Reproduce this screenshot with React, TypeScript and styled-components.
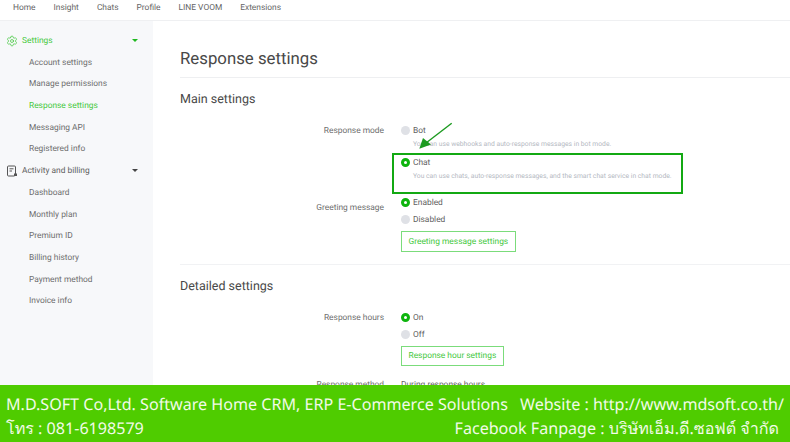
import React from "react";
import styled, { createGlobalStyle } from "styled-components";
import { Settings } from "lucide-react";

const navItems = ["Home", "Insight", "Chats", "Profile", "LINE VOOM", "Extensions"];
const settingsItems = ["Account settings", "Manage permissions", "Response settings", "Messaging API", "Registered info"];
const billingItems = ["Dashboard", "Monthly plan", "Premium ID", "Billing history", "Payment method", "Invoice info"];

const BillingIcon = () => (
  <svg width="12" height="12" viewBox="0 0 12 12" fill="none" stroke="#555" strokeWidth="1">
    <path d="M9.5 9V2a1 1 0 0 0-1-1h-6a1 1 0 0 0-1 1v8a1 1 0 0 0 1 1h6" />
    <path d="M3.5 3.8h4M3.5 6h2.5" />
    <rect x="8" y="8.5" width="3" height="2.5" fill="#555" stroke="none" />
  </svg>
);

const App = () => {
  return (
    <Page>
      <GlobalStyle />
      <Nav>
        {navItems.map((item) => (
          <NavItem key={item}>{item}</NavItem>
        ))}
      </Nav>
      <Body>
        <Sidebar>
          <Group $active>
            <Settings size={12} strokeWidth={1.5} />
            <span>Settings</span>
            <Caret $active />
          </Group>
          {settingsItems.map((item) => (
            <SideLink key={item} $active={item === "Response settings"}>
              {item}
            </SideLink>
          ))}
          <Group>
            <BillingIcon />
            <span>Activity and billing</span>
            <Caret />
          </Group>
          {billingItems.map((item) => (
            <SideLink key={item}>{item}</SideLink>
          ))}
        </Sidebar>
        <Main>
          <Title>Response settings</Title>
          <Section>
            <Heading>Main settings</Heading>
            <Form>
              <Label>Response mode</Label>
              <Options>
                <Radio>
                  <Dot />
                  Bot
                </Radio>
                <Hint>You can use webhooks and auto-response messages in bot mode.</Hint>
                <Radio $gapTop={9}>
                  <Dot $on />
                  Chat
                </Radio>
                <Hint>You can use chats, auto-response messages, and the smart chat service in chat mode.</Hint>
                <Highlight />
                <Arrow width="40" height="32" viewBox="0 0 40 32">
                  <path d="M35.7 2.2 L10 22" stroke="#1c9a20" strokeWidth="1.4" fill="none" />
                  <path d="M3.3 27.8 L7 17 L15 23.5 Z" fill="#1c9a20" />
                </Arrow>
              </Options>
              <Label $top={22}>Greeting message</Label>
              <Options $top={17}>
                <Radio>
                  <Dot $on />
                  Enabled
                </Radio>
                <Radio $gapTop={6}>
                  <Dot />
                  Disabled
                </Radio>
                <OutlineButton>Greeting message settings</OutlineButton>
              </Options>
            </Form>
          </Section>
          <Section $line>
            <Heading>Detailed settings</Heading>
            <Form>
              <Label>Response hours</Label>
              <Options>
                <Radio>
                  <Dot $on />
                  On
                </Radio>
                <Radio $gapTop={6}>
                  <Dot />
                  Off
                </Radio>
                <OutlineButton>Response hour settings</OutlineButton>
              </Options>
              <Label $top={12.5}>Response method</Label>
              <Options $top={12.5}>
                <Plain>During response hours</Plain>
              </Options>
            </Form>
          </Section>
        </Main>
      </Body>
      <Banner>
        <BannerRow>
          <span>M.D.SOFT Co,Ltd. Software Home CRM, ERP E-Commerce Solutions</span>
          <span>Website : http://www.mdsoft.co.th/</span>
        </BannerRow>
        <BannerRow>
          <span>โทร : 081-6198579</span>
          <BannerRight>Facebook Fanpage : บริษัทเอ็ม.ดี.ซอฟต์ จำกัด</BannerRight>
        </BannerRow>
      </Banner>
    </Page>
  );
};

export default App;

const GlobalStyle = createGlobalStyle`
  html, body {
    margin: 0;
    padding: 0;
    background: #fff;
  }
  * {
    box-sizing: border-box;
  }
`;

const Page = styled.div`
  width: 790px;
  height: 442px;
  display: flex;
  flex-direction: column;
  overflow: hidden;
  font-family: Roboto, "Liberation Sans", sans-serif;
  text-rendering: geometricPrecision;
  color: #555;
`;

const Nav = styled.div`
  height: 21px;
  flex-shrink: 0;
  display: flex;
  gap: 18px;
  padding: 3px 13px 0;
  align-items: flex-start;
  border-bottom: 1px solid #eff0f2;
`;

const NavItem = styled.div`
  font-size: 8.4px;
  line-height: 11px;
  color: #666;
`;

const Body = styled.div`
  flex: 1;
  display: flex;
  min-height: 0;
  overflow: hidden;
`;

const Sidebar = styled.div`
  width: 153px;
  flex-shrink: 0;
  background: #f7f8fa;
  padding-top: 9px;
`;

const Group = styled.div<{ $active?: boolean }>`
  height: 21.7px;
  display: flex;
  align-items: center;
  gap: 4px;
  padding: 0 15px 0 6px;
  font-size: 8.4px;
  color: ${(p) => (p.$active ? "#45c840" : "#5f5f5f")};
  svg {
    flex-shrink: 0;
    width: 12px;
    height: 12px;
  }
`;

const Caret = styled.i<{ $active?: boolean }>`
  margin-left: auto;
  width: 0;
  height: 0;
  border-left: 3px solid transparent;
  border-right: 3px solid transparent;
  border-top: 3px solid ${(p) => (p.$active ? "#1fb81f" : "#444")};
`;

const SideLink = styled.div<{ $active?: boolean }>`
  height: 21.7px;
  line-height: 23.7px;
  padding-left: 29px;
  font-size: 8.4px;
  color: ${(p) => (p.$active ? "#45c840" : "#6e6e6e")};
`;

const Main = styled.div`
  flex: 1;
  padding: 27px 0 0 27px;
  position: relative;
`;

const Title = styled.div`
  font-size: 16.8px;
  line-height: 22px;
  color: #484848;
  padding-bottom: 7px;
  border-bottom: 1px solid #eeeff1;
`;

const Section = styled.div<{ $line?: boolean }>`
  padding-top: ${(p) => (p.$line ? "12.5px" : "13px")};
  border-top: ${(p) => (p.$line ? "1px solid #f1f2f4" : "none")};
  margin-top: ${(p) => (p.$line ? "12.5px" : "0")};
`;

const Heading = styled.div`
  font-size: 12.5px;
  line-height: 17px;
  color: #484848;
  margin-bottom: 17px;
`;

const Form = styled.div`
  display: grid;
  grid-template-columns: 204px 1fr;
  column-gap: 17px;
  align-items: start;
`;

const Label = styled.div<{ $top?: number }>`
  text-align: right;
  font-size: 8.4px;
  line-height: 13px;
  height: 11px;
  color: #6e6e6e;
  margin-top: ${(p) => p.$top || 0}px;
`;

const Options = styled.div<{ $top?: number }>`
  position: relative;
  display: flex;
  flex-direction: column;
  align-items: flex-start;
  margin-top: ${(p) => p.$top || 0}px;
`;

const Radio = styled.div<{ $gapTop?: number }>`
  display: flex;
  align-items: flex-start;
  gap: 3px;
  font-size: 8.4px;
  line-height: 13px;
  height: 11px;
  color: #5f5f5f;
  margin-top: ${(p) => p.$gapTop || 0}px;
`;

const Dot = styled.i<{ $on?: boolean }>`
  width: 9px;
  height: 9px;
  margin-top: 1px;
  border-radius: 50%;
  background: ${(p) => (p.$on ? "#fff" : "#dfe1e6")};
  border: ${(p) => (p.$on ? "3px solid #0db40d" : "none")};
`;

const Hint = styled.div`
  font-size: 6.75px;
  line-height: 11px;
  height: 9px;
  margin-top: 3px;
  padding-left: 12px;
  color: #b4b8bf;
  white-space: nowrap;
`;

const Highlight = styled.div`
  position: absolute;
  left: -9px;
  top: 28px;
  width: 291px;
  height: 41px;
  border: 2px solid #13a913;
  pointer-events: none;
`;

const Arrow = styled.svg`
  position: absolute;
  left: 15px;
  top: -4px;
`;

const OutlineButton = styled.div`
  margin-top: 6px;
  height: 20.5px;
  padding: 1px 6.5px 0;
  display: flex;
  align-items: center;
  font-size: 8.4px;
  color: #45c840;
  border: 1px solid #7bdc7b;
`;

const Plain = styled.div`
  font-size: 8.4px;
  line-height: 13px;
  height: 11px;
  color: #5f5f5f;
`;

const Banner = styled.div`
  height: 57px;
  flex-shrink: 0;
  background: #4fcc00;
  color: #f2fbe8;
  font-family: "Noto Sans", "Open Sans", sans-serif;
  font-size: 16.1px;
  padding: 7px 6px 0;
  position: relative;
`;

const BannerRow = styled.div`
  height: 24px;
  line-height: 24px;
  display: flex;
  justify-content: space-between;
  white-space: nowrap;
`;

const BannerRight = styled.span`
  margin-right: 5px;
`;
